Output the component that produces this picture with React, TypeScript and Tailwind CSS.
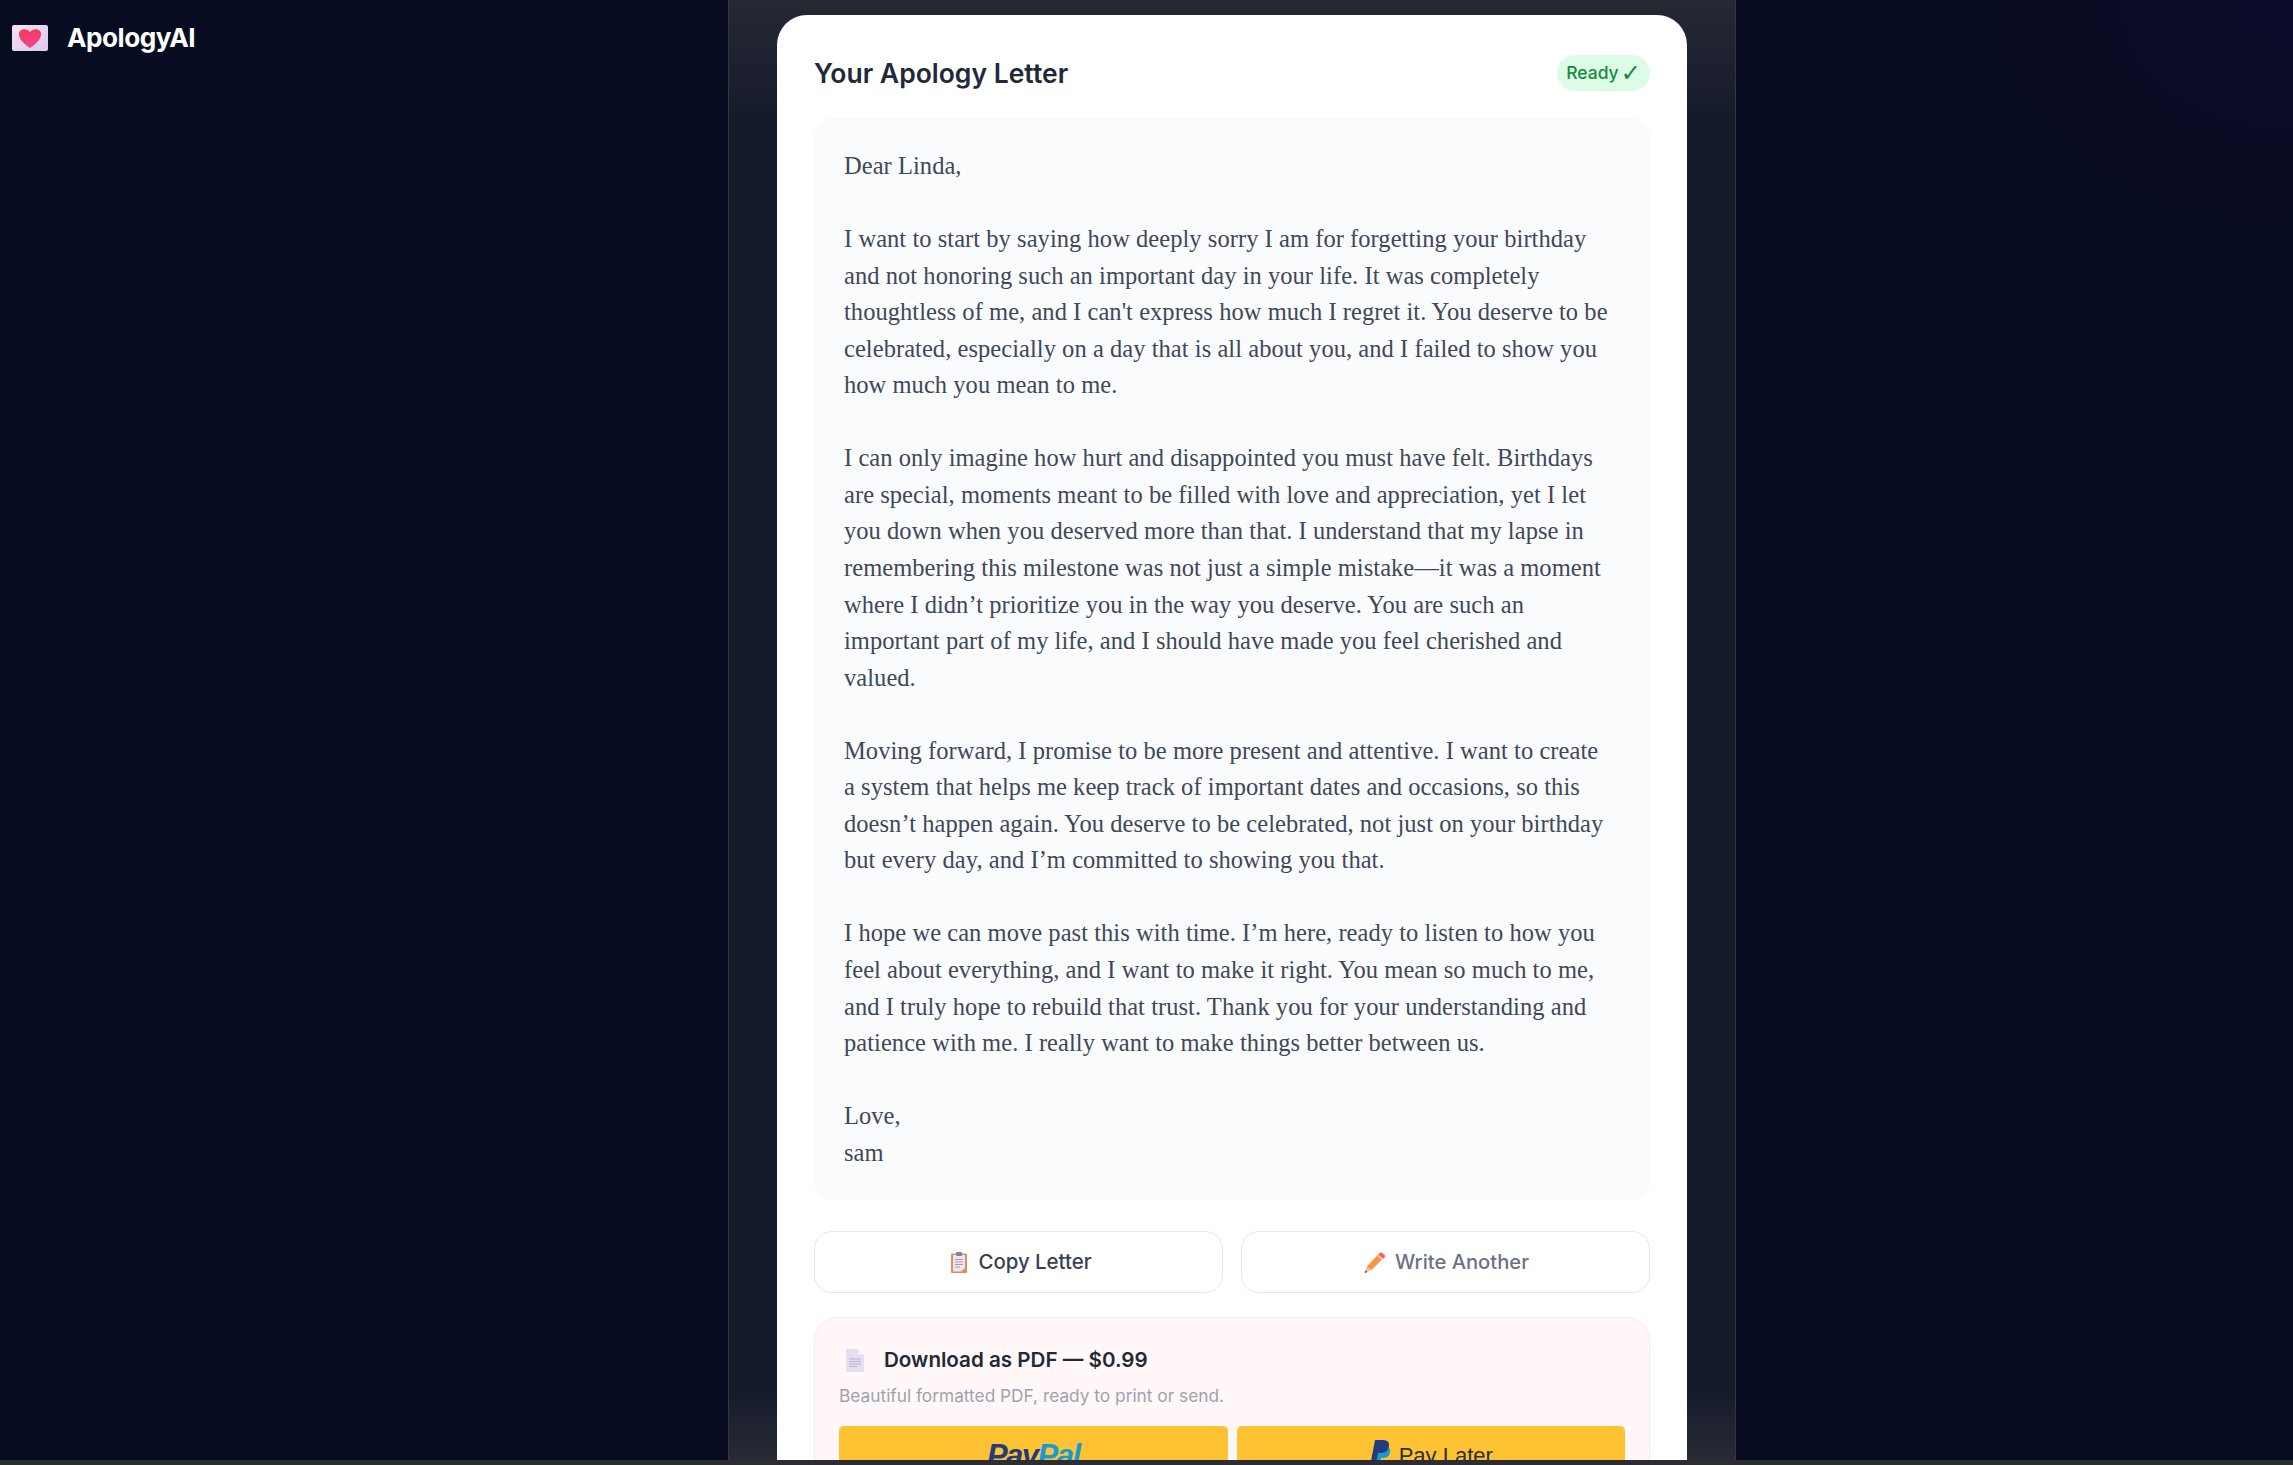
import React from "react";

const letter = [
  ["Dear Linda,"],
  [
    "I want to start by saying how deeply sorry I am for forgetting your birthday",
    "and not honoring such an important day in your life. It was completely",
    "thoughtless of me, and I can't express how much I regret it. You deserve to be",
    "celebrated, especially on a day that is all about you, and I failed to show you",
    "how much you mean to me.",
  ],
  [
    "I can only imagine how hurt and disappointed you must have felt. Birthdays",
    "are special, moments meant to be filled with love and appreciation, yet I let",
    "you down when you deserved more than that. I understand that my lapse in",
    "remembering this milestone was not just a simple mistake—it was a moment",
    "where I didn’t prioritize you in the way you deserve. You are such an",
    "important part of my life, and I should have made you feel cherished and",
    "valued.",
  ],
  [
    "Moving forward, I promise to be more present and attentive. I want to create",
    "a system that helps me keep track of important dates and occasions, so this",
    "doesn’t happen again. You deserve to be celebrated, not just on your birthday",
    "but every day, and I’m committed to showing you that.",
  ],
  [
    "I hope we can move past this with time. I’m here, ready to listen to how you",
    "feel about everything, and I want to make it right. You mean so much to me,",
    "and I truly hope to rebuild that trust. Thank you for your understanding and",
    "patience with me. I really want to make things better between us.",
  ],
  ["Love,", "sam"],
];

function LetterHeart() {
  return (
    <svg width="36" height="26" viewBox="0 0 36 26">
      <defs>
        <linearGradient id="env" x1="0" y1="0" x2="1" y2="1">
          <stop offset="0" stopColor="#f3e3ef" />
          <stop offset="1" stopColor="#dcc8ee" />
        </linearGradient>
        <linearGradient id="hrt" x1="0" y1="0" x2="0" y2="1">
          <stop offset="0" stopColor="#f8385c" />
          <stop offset="1" stopColor="#f0458f" />
        </linearGradient>
      </defs>
      <rect width="36" height="26" rx="2" fill="url(#env)" />
      <path d="M18 23 C10 17.500 7 13.500 7 9 C7 4 14 2.500 18 7 C22 2.500 29 4 29 9 C29 13.500 26 17.500 18 23Z" fill="url(#hrt)" />
    </svg>
  );
}

function Clipboard() {
  return (
    <svg width="16" height="21" viewBox="0 0 16 21">
      <rect y="1.500" width="16" height="19.500" rx="1" fill="#d9925f" />
      <path d="M2 3 H14 V16 L10 19.500 H2Z" fill="#efe6f1" />
      <rect x="5" y="0" width="6" height="4" rx="1" fill="#8a7f8e" />
      <path d="M4 7.500H12M4 10H12M4 12.500H12M4 15H9" stroke="#a99bb5" strokeWidth="1" />
    </svg>
  );
}

function Pencil() {
  return (
    <svg width="22" height="21" viewBox="0 0 21 21">
      <path d="M15 1 L20 5 L7 18 L2 15Z" fill="#fb923c" />
      <path d="M16.500 0 L21 4 L19 6.500 L14.500 2.500Z" fill="#f8605e" />
      <path d="M14 3 L18.500 7 L17.500 8.200 L13 4.200Z" fill="#eac9cf" />
      <path d="M2 15 L7 18 L0 21Z" fill="#f0c39c" />
      <path d="M1 18.500 L3 20 L0 21Z" fill="#6b3a50" />
    </svg>
  );
}

function Doc() {
  return (
    <svg width="18" height="23" viewBox="0 0 18 23">
      <path d="M0 0 H12 L18 6 V23 H0Z" fill="#e6ddf0" />
      <path d="M12 0 L18 6 H12Z" fill="#f4eff8" />
      <path d="M3 10H15M3 12.500H15M3 15H15M3 17.500H11" stroke="#bdb2c9" strokeWidth="1" />
    </svg>
  );
}

function PayPalP() {
  return (
    <svg width="20" height="24" viewBox="0 0 20 24">
      <path d="M6 7 H15 C20 7 20 12 18 15 C16.500 18 13 18 10 18 L9 24 H3Z" fill="#179bd7" />
      <path d="M4 0 H12 C18 0 19 4 17.500 8 C16 12 13 13 9 13 H7 L5.500 21 H0Z" fill="#253b80" />
    </svg>
  );
}

export default function App() {
  return (
    <div className="relative flex h-[1465px] w-full overflow-hidden bg-[#070c20] font-['Inter','Liberation_Sans',sans-serif]">
      <div className="absolute inset-x-0 bottom-0 z-10 h-[5px] bg-[#2b2d33]" />
      <div className="w-[728px] shrink-0 pl-3 pt-[24px]">
        <div className="flex items-center gap-[19px]">
          <LetterHeart />
          <span className="pt-[1px] text-[26.200px] font-bold leading-[26px] tracking-[-0.5px] text-white">ApologyAI</span>
        </div>
      </div>
      <div className="h-full w-[1008px] shrink-0 border-x border-[#33363f] bg-[linear-gradient(to_bottom,#262833_0%,#161b2c_8%,#161b2c_95%,#2a2c35_100%)] px-[48px] pt-[15px]">
        <div className="relative h-[1600px] w-[910px] rounded-t-[30px] bg-white px-[37px] pt-[40px]">
          <div className="flex h-[36px] items-center justify-between">
            <h2 className="pb-[1px] text-[26.500px] font-semibold leading-[36px] text-[#1f2937]">Your Apology Letter</h2>
            <span className="flex h-[36px] w-[93px] items-center justify-center gap-[2px] rounded-full bg-[#dcfce7] text-[17.500px] font-medium text-[#16893f]">
              Ready
              <span className="font-['DejaVu_Sans',sans-serif] text-[24px] font-normal leading-none">✓</span>
            </span>
          </div>
          <div className="mt-[27px] h-[1082px] rounded-[18px] bg-[#fafbfd] px-[30px] pt-[30px] font-['Liberation_Serif',serif] text-[24.500px] leading-[36.55px] tracking-[0.05px] text-[#3f4858]">
            {letter.map((p, i) => (
              <div key={i} className="mb-[36.55px]">
                {p.map((l, j) => (
                  <div key={j} className="whitespace-nowrap">{l}</div>
                ))}
              </div>
            ))}
          </div>
          <div className="mt-[31px] grid grid-cols-2 gap-[18px]">
            <button className="flex h-[62px] items-center justify-center gap-[11px] rounded-[18px] border border-[#e5e7eb] bg-white pl-[6px] text-[20.400px] font-medium text-[#374151]">
              <Clipboard />
              Copy Letter
            </button>
            <button className="flex h-[62px] items-center justify-center gap-[9px] rounded-[18px] border border-[#e5e7eb] bg-white pl-[2px] text-[20.200px] font-medium text-[#6b7280]">
              <Pencil />
              Write Another
            </button>
          </div>
          <div className="mt-[24px] h-[300px] rounded-[24px] border border-[#fce7eb] bg-[#fff7f8] px-[24px] pt-[30px]">
            <div className="flex h-[24px] items-center gap-[20px] pl-[7px]">
              <Doc />
              <span className="text-[20.600px] font-semibold text-[#1f2937]">Download as PDF — $0.99</span>
            </div>
            <p className="mt-[12px] text-[17.300px] leading-[24px] text-[#9ca3af]">Beautiful formatted PDF, ready to print or send.</p>
            <div className="mt-[18px] grid grid-cols-2 gap-[9px]">
              <div className="flex h-[55px] items-start justify-center rounded-[5px] bg-[#ffc232] pt-[14px]">
                <span className="font-['Liberation_Sans',sans-serif] text-[31px] font-bold italic leading-[32px] tracking-[-1.5px] text-[#253b80]">Pay<span className="text-[#179bd7]">Pal</span></span>
              </div>
              <div className="flex h-[55px] items-start justify-center gap-[8px] rounded-[5px] bg-[#ffc232] pt-[14px] pl-[2px]">
                <PayPalP />
                <span className="pt-[1px] font-['Liberation_Sans',sans-serif] text-[22px] leading-[30px] text-[#2c2e2f]">Pay Later</span>
              </div>
            </div>
          </div>
        </div>
      </div>
      <div className="flex-1 bg-[radial-gradient(ellipse_400px_300px_at_100%_0%,#0e0c2c_0%,#0a0c24_50%,#070c20_100%)]" />
    </div>
  );
}
